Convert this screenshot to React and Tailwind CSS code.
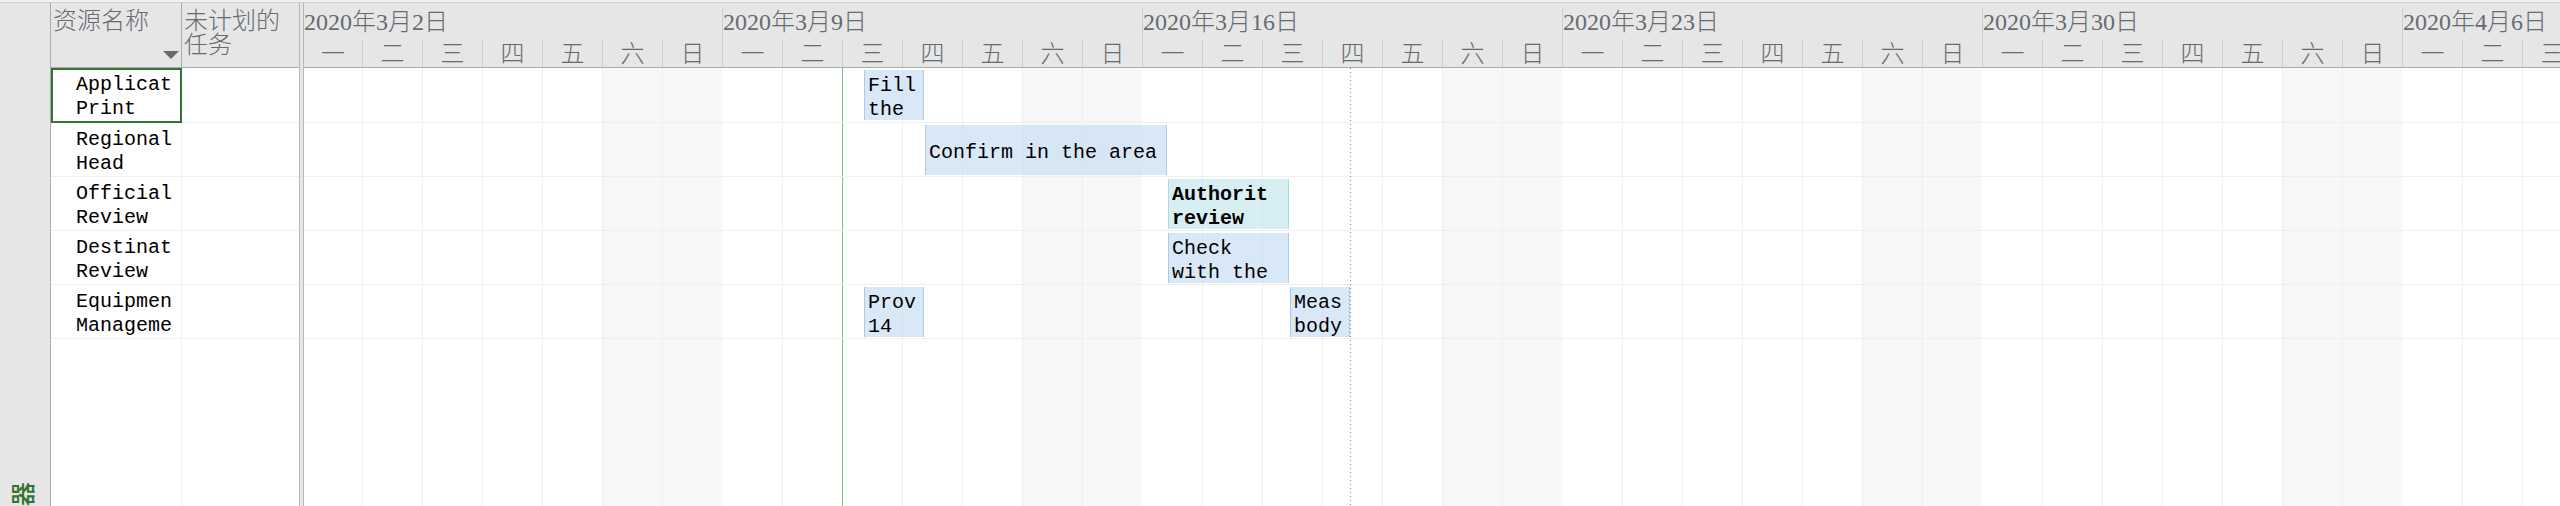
const DAYS = ["一", "二", "三", "四", "五", "六", "日"];
const WEEKS = [
  { label: "2020年3月2日", days: DAYS },
  { label: "2020年3月9日", days: DAYS, today: 2 },
  { label: "2020年3月16日", days: DAYS },
  { label: "2020年3月23日", days: DAYS },
  { label: "2020年3月30日", days: DAYS },
  { label: "2020年4月6日", days: DAYS.slice(0, 3) },
];

const BLUE = "border-[#a9cbec] bg-[#c9def4]/70";
const TEAL = "border-[#a4dde2] bg-[#c6e8ec]/70 font-bold";

const ROWS = [
  { name: ["Applicat", "Print"], selected: true, tasks: [{ lines: ["Fill", "the"], left: 560, width: 60, tone: BLUE }] },
  { name: ["Regional", "Head"], tasks: [{ lines: ["Confirm in the area"], left: 621, width: 242, tone: BLUE }] },
  { name: ["Official", "Review"], tasks: [{ lines: ["Authorit", "review"], left: 864, width: 121, tone: TEAL }] },
  { name: ["Destinat", "Review"], tasks: [{ lines: ["Check", "with the"], left: 864, width: 121, tone: BLUE }] },
  {
    name: ["Equipmen", "Manageme"],
    tasks: [
      { lines: ["Prov", "14"], left: 560, width: 60, tone: BLUE },
      { lines: ["Meas", "body"], left: 986, width: 60, tone: BLUE },
    ],
  },
];

function Lines({ lines }) {
  return lines.map((line) => (
    <span key={line} className="block whitespace-nowrap">{line}</span>
  ));
}

function ResourceTable() {
  return (
    <table className="h-full w-[248px] shrink-0 table-fixed border-separate border-spacing-0">
      <colgroup>
        <col className="w-[131px]" />
        <col className="w-[117px]" />
      </colgroup>
      <thead className="bg-[#e6e6e6] text-2xl/6 text-[#666b70]">
        <tr className="h-[65px]">
          <th className="border-r border-b border-[#ababab] p-0 align-top font-light">
            <button type="button" aria-label="资源名称" className="flex h-16 w-full flex-col justify-between px-0.5 pt-1.5 pb-2 text-left">
              <span className="whitespace-nowrap">资源名称</span>
              <svg className="h-2 w-4 self-end" viewBox="0 0 16 8" fill="#666b70" aria-hidden="true">
                <path d="M0 0h16L8 8z" />
              </svg>
            </button>
          </th>
          <th className="border-b border-[#ababab] px-0.5 pt-1.5 pb-0 text-left align-top font-light">未计划的任务</th>
        </tr>
      </thead>
      <tbody className="font-[Liberation_Mono,Noto_Sans_CJK_SC,monospace] text-xl/6 text-black">
        {ROWS.map((row) => (
          <tr key={row.name.join()} className={row.selected ? "h-[55px]" : "h-[54px]"}>
            <td className={`border-r border-b border-[#efefef] p-0 align-top ${row.selected ? "outline-2 -outline-offset-2 outline-[#31752f]" : ""}`}>
              <div className="overflow-hidden pt-[5px] pl-[25px]"><Lines lines={row.name} /></div>
            </td>
            <td className="border-b border-[#efefef] p-0" />
          </tr>
        ))}
        <tr>
          <td className="border-r border-[#f3f3f3] p-0" />
          <td className="p-0" />
        </tr>
      </tbody>
    </table>
  );
}

function TimelineHeader() {
  return (
    <div className="flex h-[65px] shrink-0 border-b border-[#ababab] bg-[#e6e6e6] pt-[5px] text-2xl/6 font-light text-[#666b70]">
      {WEEKS.map((week, w) => (
        <div key={week.label} className={`flex shrink-0 flex-col justify-between ${w ? "border-l border-[#d0d0d0]" : ""}`}>
          <div className="pt-0.5 whitespace-nowrap">{week.label}</div>
          <div className="flex h-[27px]">
            {week.days.map((day, d) => (
              <div key={day} className={`flex shrink-0 items-center justify-center ${d ? "w-[60px] border-l border-[#d0d0d0]" : w ? "w-[59px]" : "w-[58px]"}`}>{day}</div>
            ))}
          </div>
        </div>
      ))}
    </div>
  );
}

function DayGrid() {
  return (
    <div className="absolute inset-0 flex" aria-hidden="true">
      {WEEKS.map((week, w) =>
        week.days.map((day, d) => {
          const line = week.today === d ? "border-[#7fbf7f]" : "border-[#efefef]";
          return (
            <div
              key={week.label + day}
              className={`shrink-0 ${d || w ? "w-[60px]" : "w-[58px]"} ${d ? `border-l ${line}` : ""} ${d > 4 ? "bg-[#f7f7f7]" : ""}`}
            />
          );
        })
      )}
    </div>
  );
}

function Task({ lines, left, width, tone }) {
  return (
    <div className={`absolute top-0.5 h-[50px] overflow-hidden border-x pl-[3px] ${lines.length > 1 ? "pt-1" : "pt-4"} ${tone}`} style={{ left, width }}>
      <Lines lines={lines} />
    </div>
  );
}

function Timeline() {
  return (
    <section className="flex min-w-0 flex-1 flex-col overflow-hidden">
      <TimelineHeader />
      <div className="relative flex-1 font-[Liberation_Mono,Noto_Sans_CJK_SC,monospace] text-xl/6 text-black">
        <DayGrid />
        {ROWS.map((row) => (
          <div key={row.name.join()} className={`relative border-b border-[#efefef] ${row.selected ? "h-[55px]" : "h-[54px]"}`}>
            {row.tasks.map((task) => <Task key={task.left} {...task} />)}
          </div>
        ))}
        <div className="absolute inset-y-0 left-[1046px] w-px bg-[repeating-linear-gradient(to_bottom,#808080_0_1px,transparent_1px_4px)]" />
      </div>
    </section>
  );
}

export default function App() {
  return (
    <main className="flex h-screen flex-col overflow-hidden bg-white font-[Liberation_Serif,Noto_Sans_CJK_SC,serif]">
      <div className="h-[3px] shrink-0 border-b border-[#d0d0d0] bg-[#f0f0f0]" />
      <div className="flex min-h-0 flex-1">
        <aside className="flex w-[51px] shrink-0 flex-col justify-end border-r border-[#ababab] bg-[#e6e6e6]">
          <span className="ml-3 size-6 -rotate-90 text-2xl/6 font-medium text-[#31752f]">器</span>
        </aside>
        <ResourceTable />
        <div className="w-[5px] shrink-0 border-x border-[#b8b8b8] bg-[#e6e6e6]" />
        <Timeline />
      </div>
    </main>
  );
}
